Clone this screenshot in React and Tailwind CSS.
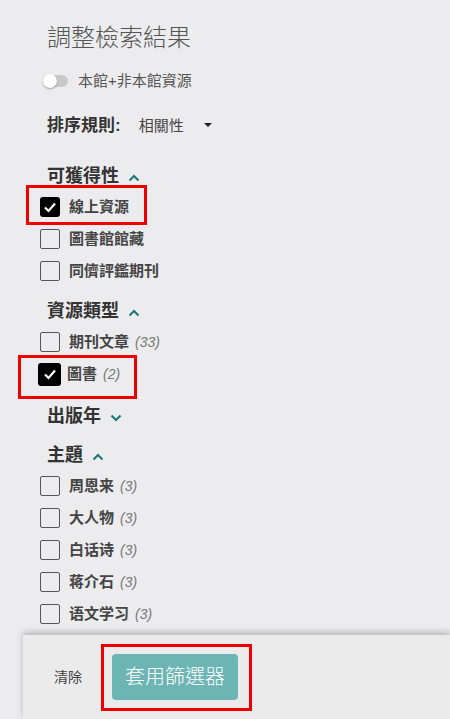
import React from "react";

const FONT = { fontFamily: '"Liberation Sans","Noto Sans CJK TC",sans-serif' };

function ChevronUp() {
  return (
    <svg width="12" height="8" viewBox="0 0 12 8" className="ml-[9px] mt-[2px]">
      <polyline points="1.5,6.5 6,2 10.5,6.5" fill="none" stroke="#23797a" strokeWidth="2.2" />
    </svg>
  );
}
function ChevronDown() {
  return (
    <svg width="12" height="8" viewBox="0 0 12 8" className="ml-[9px] mt-[2px]">
      <polyline points="1.5,1.5 6,6 10.5,1.5" fill="none" stroke="#23797a" strokeWidth="2.2" />
    </svg>
  );
}

function Check({ checked, big }) {
  const size = big ? "w-[23px] h-[23px] -ml-[2px] mr-[6px]" : "w-[20px] h-[20px] mr-[9px]";
  if (checked) {
    return (
      <span className={`${size} shrink-0 rounded-[3px] bg-black flex items-center justify-center`}>
        <svg width="14" height="12" viewBox="0 0 14 12">
          <polyline points="2,6.5 5.5,10 12,2.5" fill="none" stroke="white" strokeWidth="2.2" />
        </svg>
      </span>
    );
  }
  return <span className={`${size} shrink-0 rounded-[2px] border border-[#555] bg-transparent`} />;
}

function Item({ label, count, checked, big, children }) {
  return (
    <div className="relative h-8 flex items-center">
      <Check checked={checked} big={big} />
      <span className="text-[15px] font-semibold text-[#444]">{label}</span>
      {count && <span className="ml-[6px] text-[14px] italic font-light text-[#777]">({count})</span>}
      {children}
    </div>
  );
}

function Header({ label, down, cls }) {
  return (
    <div className={`h-[29px] flex items-center pl-[7px] ${cls}`}>
      <span className="text-[18px] font-bold text-[#333]">{label}</span>
      {down ? <ChevronDown /> : <ChevronUp />}
    </div>
  );
}

export default function App() {
  return (
    <div className="w-[450px] h-[719px] bg-[#ececee] flex flex-col overflow-hidden" style={FONT}>
      <div className="pl-[40px] pt-[18px] flex flex-col">
        <div className="h-[40px] flex items-center pl-[7px]">
          <span className="text-[24px] font-light text-[#555] tracking-[0px]">調整檢索結果</span>
        </div>
        <div className="h-[46px] flex items-center pl-[4px]">
          <span className="relative w-[24px] h-[12px] rounded-full bg-[#c9c9c9] mr-[10px]">
            <span className="absolute left-[-1px] top-[-1px] w-[14px] h-[14px] rounded-full bg-white shadow-[0_1px_2px_rgba(0,0,0,0.35)]" />
          </span>
          <span className="text-[15px] text-[#555]">本館+非本館資源</span>
        </div>
        <div className="h-[44px] flex items-center pl-[7px]">
          <span className="text-[17px] font-bold text-[#333]">排序規則:</span>
          <span className="ml-[18px] text-[15px] text-[#444]">相關性</span>
          <svg width="8" height="4" viewBox="0 0 8 4" className="ml-[20px] -mt-[3px]">
            <polygon points="0,0 8,0 4,4" fill="#222" />
          </svg>
        </div>

        <Header label="可獲得性" cls="mt-[14px] h-[28px]" />
        <Item label="線上資源" checked>
          <span className="absolute left-[-14px] top-[-6px] w-[121px] h-[40px] border-[3px] border-[#ee0000]" />
        </Item>
        <Item label="圖書館館藏" />
        <Item label="同儕評鑑期刊" />

        <Header label="資源類型" cls="mt-[10px]" />
        <Item label="期刊文章" count="33" />
        <Item label="圖書" count="2" checked big>
          <span className="absolute left-[-22px] top-[-3px] w-[119px] h-[44px] border-[3px] border-[#ee0000]" />
        </Item>

        <Header label="出版年" down cls="mt-[12px]" />

        <Header label="主題" cls="mt-[10px]" />
        <Item label="周恩来" count="3" />
        <Item label="大人物" count="3" />
        <Item label="白话诗" count="3" />
        <Item label="蒋介石" count="3" />
        <Item label="语文学习" count="3" />
      </div>

      <div className="mt-auto ml-[23px] h-[84px] bg-[#ebebeb] shadow-[0_-3px_6px_rgba(0,0,0,0.22)] flex items-center pl-[31px]">
        <span className="text-[14px] text-[#444]">清除</span>
        <div className="relative ml-[30px]">
          <button className="w-[126px] h-[46px] rounded-[4px] bg-[#6cb5b4] text-white text-[20px] font-light flex items-center justify-center">
            套用篩選器
          </button>
          <span className="absolute left-[-11px] top-[-10px] w-[151px] h-[67px] border-[3px] border-[#ee0000]" />
        </div>
      </div>
    </div>
  );
}
